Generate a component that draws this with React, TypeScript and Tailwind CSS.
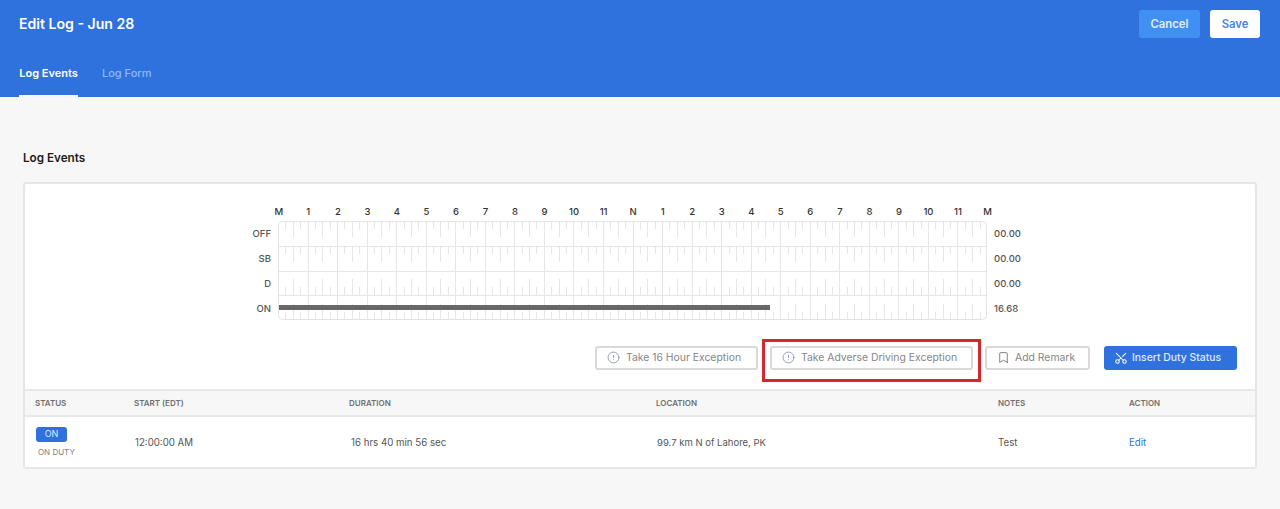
import React from 'react'
import { Bookmark, CircleAlert, Scissors } from 'lucide-react'

const HOURS = ['M', '1', '2', '3', '4', '5', '6', '7', '8', '9', '10', '11', 'N', '1', '2', '3', '4', '5', '6', '7', '8', '9', '10', '11', 'M']
const ROWS = [
	{ label: 'OFF', total: '00.00' },
	{ label: 'SB', total: '00.00' },
	{ label: 'D', total: '00.00' },
	{ label: 'ON', total: '16.68' },
]

const W = 709
const H = 99
const HOUR = W / 24
const ROW = H / 4

// the log grid: hour lines, row lines and the quarter hour ticks
const LogGrid = () => {
	const lines: React.ReactNode[] = []
	for (let h = 1; h < 24; h++) {
		const x = Math.round(h * HOUR) + 0.5
		lines.push(<line key={`h${h}`} x1={x} x2={x} y1={0} y2={H} stroke="#e6e6e6" />)
	}
	for (let r = 1; r < 4; r++) {
		const y = Math.round(r * ROW) + 0.5
		lines.push(<line key={`r${r}`} x1={0} x2={W} y1={y} y2={y} stroke="#e6e6e6" />)
	}
	for (let h = 0; h < 24; h++) {
		for (let q = 1; q < 4; q++) {
			const x = Math.round((h + q / 4) * HOUR) + 0.5
			const len = q === 2 ? 16 : 8
			for (let r = 0; r < 4; r++) {
				const top = Math.round(r * ROW)
				const bottom = Math.round((r + 1) * ROW)
				const up = r < 2
				lines.push(
					<line
						key={`t${h}-${q}-${r}`}
						x1={x}
						x2={x}
						y1={up ? top : bottom - len}
						y2={up ? top + len : bottom}
						stroke="#e6e6e6"
					/>
				)
			}
		}
	}
	return (
		<svg width={W} height={H} className="block">
			{lines}
			<rect x={0} y={84} width={492} height={5} fill="#686868" />
			<rect x={0.5} y={0.5} width={W - 1} height={H - 1} rx={4} fill="none" stroke="#e3e3e3" />
		</svg>
	)
}

const OutlineButton = ({ icon, label, className }: { icon: React.ReactNode; label: string; className: string }) => (
	<button className={`flex h-[24px] items-center rounded-[3px] border-2 border-[#d9d9d9] bg-white text-[10.4px] text-[#858585] ${className}`}>
		{icon}
		{label}
	</button>
)

export default function App() {
	return (
		<div className="min-h-[509px] bg-[#f7f7f7] font-['Inter',sans-serif]">
			<header className="h-[97px] bg-[#2f72de] px-[19px]">
				<div className="flex h-[48px] items-center justify-between">
					<h1 className="text-[14.1px] font-semibold text-white">Edit Log - Jun 28</h1>
					<div className="flex gap-[10px] pr-[1px]">
						<button className="h-[28px] w-[61px] rounded-[3px] bg-[#408ff2] text-[11.3px] font-semibold text-[#e4eefc]">Cancel</button>
						<button className="h-[28px] w-[50px] rounded-[3px] bg-white text-[11.3px] font-semibold text-[#4a84e4]">Save</button>
					</div>
				</div>
				<nav className="flex h-[49px] gap-[24px]">
					<a className="flex w-[59px] items-center justify-center border-b-2 border-[#f4f7fd] pt-[3px] text-[11px] font-semibold whitespace-nowrap text-white">Log Events</a>
					<a className="flex items-center pt-[1px] text-[11px] font-medium text-[#8cbaf8]">Log Form</a>
				</nav>
			</header>

			<main className="px-[23px]">
				<h2 className="flex h-[85px] items-center pt-[38px] text-[11.7px] font-semibold text-[#1c1c1c]">Log Events</h2>

				<section className="h-[287px] rounded-[3px] border-2 border-[#e6e6e6] bg-white">
					<div className="h-[205px] pt-[20px] pl-[239px]">
						<div className="flex h-[17px] items-center">
							{HOURS.map((h, i) => (
								<span key={i} className="w-[29.54px] shrink-0 text-center text-[9.5px] font-medium text-[#333333]">{h}</span>
							))}
						</div>
						<div className="flex">
							<div className="w-[8px] shrink-0" />
							<div className="flex w-[0px] flex-col items-end pt-[1px]">
								{ROWS.map((r) => (
									<span key={r.label} className="flex h-[24.75px] items-center pr-[1px] text-[9.5px] font-medium text-[#555555]">{r.label}</span>
								))}
							</div>
							<div className="ml-[6px]">
								<LogGrid />
							</div>
							<div className="ml-[7px] flex flex-col pt-[1px]">
								{ROWS.map((r) => (
									<span key={r.label} className="flex h-[24.75px] items-center text-[9.5px] font-medium text-[#555555]">{r.total}</span>
								))}
							</div>
						</div>
					</div>

					<div className="flex h-[0px] items-start justify-end gap-[13px] pr-[18px]">
						<div className="-mt-[43px] flex items-center">
							<OutlineButton className="w-[163px] pl-[10px] gap-[6px]" icon={<CircleAlert size={13} strokeWidth={1.5} className="-mt-[1px] text-[#7d8ca6]" />} label="Take 16 Hour Exception" />
							<div className="relative ml-[12px]">
								<OutlineButton className="w-[203px] pl-[10px] gap-[6px]" icon={<CircleAlert size={13} strokeWidth={1.5} className="-mt-[1px] text-[#7d8ca6]" />} label="Take Adverse Driving Exception" />
								<div className="absolute -inset-x-[8px] -top-[7px] -bottom-[12px] border-[3px] border-[#d7252b]" />
							</div>
							<OutlineButton className="ml-[12px] w-[105px] pl-[10px] gap-[5px]" icon={<Bookmark size={13} strokeWidth={1.5} className="-mt-[1px] text-[#666666]" />} label="Add Remark" />
							<button className="ml-[14px] flex h-[24px] w-[133px] items-center gap-[4px] rounded-[3px] bg-[#2f72de] pl-[10px] text-[10.4px] font-medium text-[#dfeafb]">
								<Scissors size={14} strokeWidth={1.75} className="-rotate-90 text-white" />
								Insert Duty Status
							</button>
						</div>
					</div>

					<div className="grid h-[28px] grid-cols-[99px_215px_307px_342px_131px_1fr] items-center border-y-2 border-[#e8e8e8] bg-[#f7f7f7] pl-[10px] text-[8px] font-semibold text-[#6f6f6f]">
						<span>STATUS</span>
						<span>START (EDT)</span>
						<span>DURATION</span>
						<span>LOCATION</span>
						<span>NOTES</span>
						<span>ACTION</span>
					</div>
					<div className="grid h-[50px] grid-cols-[99px_215px_307px_342px_131px_1fr] items-center pl-[10px] text-[9.7px] text-[#555555]">
						<div className="flex flex-col items-start pl-[1px]">
							<span className="flex h-[15px] w-[31px] items-center justify-center rounded-[3px] bg-[#2f72de] text-[9px] text-[#dfeafb]">ON</span>
							<span className="mt-[4px] pl-[2px] text-[8px] text-[#808080]">ON DUTY</span>
						</div>
						<span className="pt-[2px] pl-[1px]">12:00:00 AM</span>
						<span className="pt-[2px] pl-[2px]">16 hrs 40 min 56 sec</span>
						<span className="pt-[2px] pl-[1px] text-[9.5px]">99.7 km N of Lahore, PK</span>
						<span className="pt-[2px]">Test</span>
						<a className="pt-[2px] text-[#2f72de]">Edit</a>
					</div>
				</section>
			</main>
		</div>
	)
}
